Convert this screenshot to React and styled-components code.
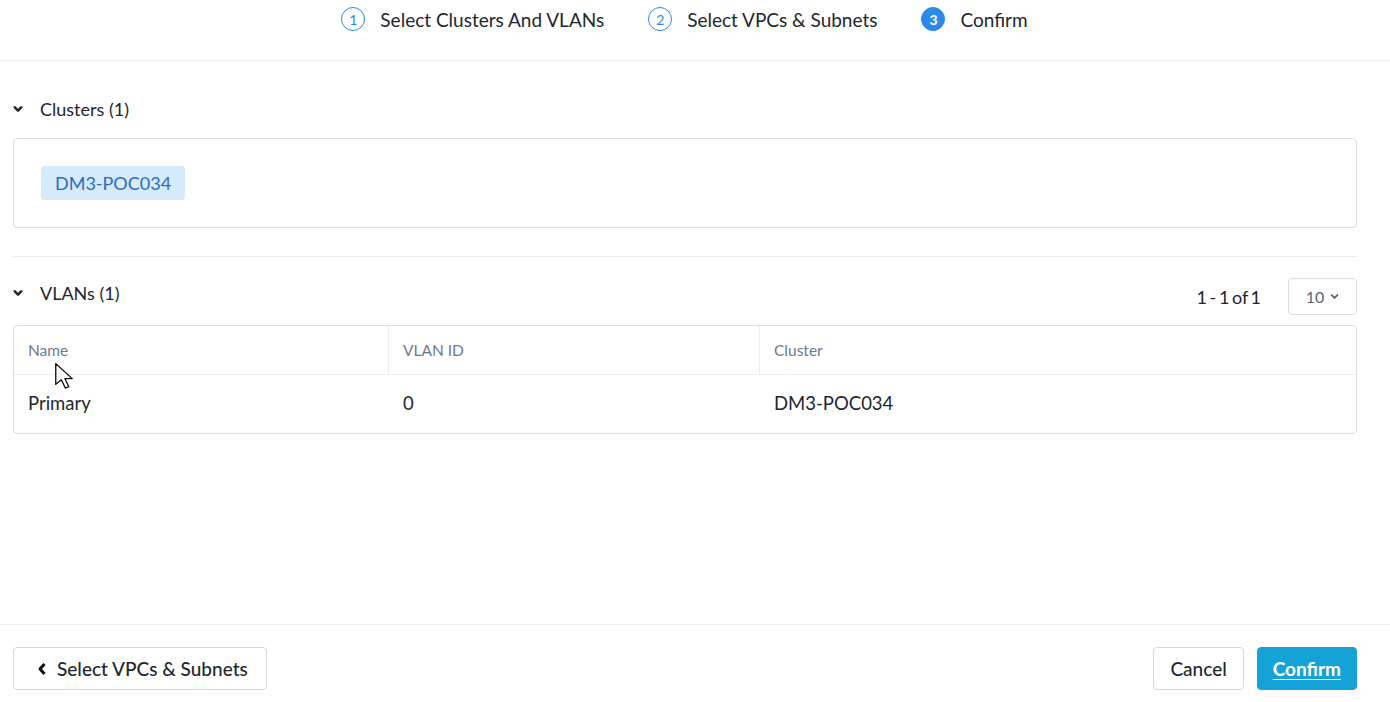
import styled, { createGlobalStyle } from 'styled-components';

const GlobalStyle = createGlobalStyle`
  html, body {
    margin: 0;
    padding: 0;
    background: #fff;
    font-family: Lato, "Open Sans", sans-serif;
    color: #22272e;
  }
  * { box-sizing: border-box; }
`;

const Page = styled.div`
  position: relative;
  height: 100vh;
  display: flex;
  flex-direction: column;
`;

const Stepper = styled.div`
  height: 61px;
  border-bottom: 1px solid #eef0f3;
  display: flex;
  justify-content: center;
  align-items: flex-start;
  padding: 7px 21px 0 0;
  gap: 44px;
`;

const Step = styled.div`
  display: flex;
  align-items: center;
  gap: 15px;
  font-size: 19px;
  color: #22272e;
`;

const StepNum = styled.span`
  width: 24px;
  height: 24px;
  border-radius: 50%;
  border: 1.5px solid #2b8ae8;
  color: ${(p) => (p.active ? '#fff' : '#2b8ae8')};
  background: ${(p) => (p.active ? '#2b8ae8' : '#fff')};
  font-size: 14px;
  font-weight: ${(p) => (p.active ? 700 : 400)};
  display: flex;
  align-items: center;
  justify-content: center;
`;

const Body = styled.div`
  flex: 1;
  padding: 30px 33px 0 13px;
`;

const SectionHead = styled.div`
  display: flex;
  align-items: flex-start;
  height: 36px;
  font-size: 18px;
  color: #22272e;
`;

const Title = styled.div`
  height: 36px;
  display: flex;
  align-items: center;
`;

const Caret = styled.span`
  width: 27px;
  display: flex;
`;

const Spacer = styled.div`
  flex: 1;
`;

const Controls = styled.div`
  display: flex;
  align-items: center;
  gap: 27px;
  margin-top: 3px;
`;

const Pager = styled.span`
  font-size: 18px;
  word-spacing: -2px;
`;

const PageSize = styled.div`
  width: 69px;
  height: 37px;
  border: 1px solid #d8dce2;
  border-radius: 4px;
  display: flex;
  align-items: center;
  justify-content: center;
  gap: 6px;
  font-size: 16px;
  color: #5b6470;
`;

const Panel = styled.div`
  border: 1px solid #d8dce2;
  border-radius: 4px;
  margin-top: ${(p) => p.top || 0}px;
  padding: ${(p) => (p.pad ? '27px 27px' : '0')};
  overflow: hidden;
`;

const Tag = styled.span`
  display: inline-block;
  background: #d5ebfb;
  color: #2d6cc0;
  font-size: 18px;
  padding: 0 14px;
  height: 34px;
  line-height: 34px;
  border-radius: 3px;
`;

const Divider = styled.hr`
  border: none;
  border-top: 1px solid #e8ebef;
  margin: 28px 0 18px;
`;

const Table = styled.div`
  display: grid;
  grid-template-columns: 375px 371px 1fr;
`;

const HeadCell = styled.div`
  height: 49px;
  display: flex;
  align-items: center;
  padding-left: 14px;
  font-size: 15.5px;
  color: #6a7a8c;
  border-bottom: 1px solid #eceef2;
  border-right: ${(p) => (p.last ? 'none' : '1px solid #eceef2')};
`;

const Cell = styled.div`
  height: 58px;
  display: flex;
  align-items: center;
  padding-left: 14px;
  padding-bottom: 2px;
  font-size: 18.5px;
  color: #22272e;
`;

const Footer = styled.div`
  border-top: 1px solid #eef0f3;
  height: 78px;
  display: flex;
  align-items: flex-start;
  padding: 22px 33px 0 13px;
  gap: 13px;
`;

const Button = styled.button`
  height: 43px;
  padding: 0 ${(p) => p.pr || 16}px 0 ${(p) => p.pl || 16}px;
  border-radius: 4px;
  font-family: inherit;
  font-size: 19px;
  display: flex;
  align-items: center;
  gap: 10px;
  cursor: pointer;
  border: 1px solid ${(p) => (p.primary ? '#14a2d7' : '#d4d8de')};
  background: ${(p) => (p.primary ? '#14a2d7' : '#fff')};
  color: ${(p) => (p.primary ? '#fff' : '#22272e')};
  font-weight: ${(p) => (p.primary ? 700 : 500)};
  text-decoration: ${(p) => (p.primary ? 'underline' : 'none')};
  text-underline-offset: 3px;
`;

const Pointer = styled.svg`
  position: absolute;
  left: 55px;
  top: 363px;
  pointer-events: none;
`;

const Chevron = ({ size = 10, color = '#22272e', width = 2.6 }) => (
  <svg width={size} height={size} viewBox="0 0 10 10">
    <path d="M1.8 3.4 L5 6.6 L8.2 3.4" fill="none" stroke={color} strokeWidth={width} strokeLinecap="round" strokeLinejoin="round" />
  </svg>
);

const BackArrow = () => (
  <svg width="10" height="14" viewBox="0 0 10 14">
    <path d="M7.5 2 L3 7 L7.5 12" fill="none" stroke="#111" strokeWidth="3" strokeLinejoin="round" />
  </svg>
);

export default function App() {
  const steps = ['Select Clusters And VLANs', 'Select VPCs & Subnets', 'Confirm'];
  return (
    <Page>
      <GlobalStyle />
      <Stepper>
        {steps.map((s, i) => (
          <Step key={s}>
            <StepNum active={i === 2}>{i + 1}</StepNum>
            {s}
          </Step>
        ))}
      </Stepper>
      <Body>
        <SectionHead>
          <Title>
            <Caret><Chevron /></Caret>
            Clusters (1)
          </Title>
        </SectionHead>
        <Panel top={11} pad>
          <Tag>DM3-POC034</Tag>
        </Panel>
        <Divider />
        <SectionHead>
          <Title>
            <Caret><Chevron /></Caret>
            VLANs (1)
          </Title>
          <Spacer />
          <Controls>
            <Pager>1 - 1 of 1</Pager>
            <PageSize>
              10 <Chevron size={9} color="#5b6470" width={2} />
            </PageSize>
          </Controls>
        </SectionHead>
        <Panel top={14}>
          <Table>
            <HeadCell>Name</HeadCell>
            <HeadCell>VLAN ID</HeadCell>
            <HeadCell last>Cluster</HeadCell>
            <Cell>Primary</Cell>
            <Cell>0</Cell>
            <Cell>DM3-POC034</Cell>
          </Table>
        </Panel>
      </Body>
      <Footer>
        <Button pl={23} pr={18}>
          <BackArrow />
          Select VPCs &amp; Subnets
        </Button>
        <Spacer />
        <Button pl={16} pr={16}>Cancel</Button>
        <Button primary pl={15} pr={15}>Confirm</Button>
      </Footer>
      <Pointer width="18" height="26" viewBox="0 0 12 20" preserveAspectRatio="none">
        <path d="M0.5 0.5 L0.5 16.5 L4.2 12.9 L6.9 19.3 L9.2 18.3 L6.6 12 L11.5 12 Z" fill="#fff" stroke="#111" strokeWidth="0.9" strokeLinejoin="round" />
      </Pointer>
    </Page>
  );
}
